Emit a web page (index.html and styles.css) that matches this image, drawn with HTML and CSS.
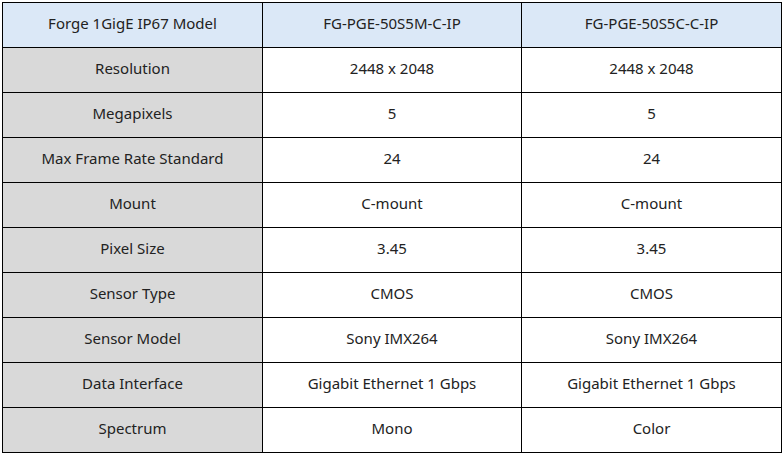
FILE: index.html
```html
<!DOCTYPE html>
<html>
<head>
<meta charset="utf-8">
<link rel="stylesheet" href="styles.css">
</head>
<body>
<table class="spec">
  <colgroup><col class="c1"><col class="c2"><col class="c3"></colgroup>
  <thead>
    <tr><th>Forge 1GigE IP67 Model</th><th>FG-PGE-50S5M-C-IP</th><th>FG-PGE-50S5C-C-IP</th></tr>
  </thead>
  <tbody>
    <tr><th>Resolution</th><td>2448 x 2048</td><td>2448 x 2048</td></tr>
    <tr><th>Megapixels</th><td>5</td><td>5</td></tr>
    <tr><th>Max Frame Rate Standard</th><td>24</td><td>24</td></tr>
    <tr><th>Mount</th><td>C-mount</td><td>C-mount</td></tr>
    <tr><th>Pixel Size</th><td>3.45</td><td>3.45</td></tr>
    <tr><th>Sensor Type</th><td>CMOS</td><td>CMOS</td></tr>
    <tr><th>Sensor Model</th><td>Sony IMX264</td><td>Sony IMX264</td></tr>
    <tr><th>Data Interface</th><td>Gigabit Ethernet 1 Gbps</td><td>Gigabit Ethernet 1 Gbps</td></tr>
    <tr><th>Spectrum</th><td>Mono</td><td>Color</td></tr>
  </tbody>
</table>
</body>
</html>
```
FILE: styles.css
```css
html, body { margin: 0; padding: 0; background: #fff; }
body { padding: 2px 0 0 2px; }
.spec {
  border-collapse: collapse;
  table-layout: fixed;
  width: 779px;
  font-family: "Noto Sans", "Open Sans", sans-serif;
  font-size: 15px;
  color: #222;
}
.c1 { width: 260px; }
.c2 { width: 259px; }
.c3 { width: 260px; }
.spec th, .spec td {
  border: 1px solid #000;
  height: 40px;
  padding: 0 0 4px 0;
  text-align: center;
  vertical-align: middle;
  font-weight: normal;
}
.spec thead th { background: #dbe8f7; }
.spec tbody th { background: #d9d9d9; }
.spec tbody td { background: #fff; }
```
